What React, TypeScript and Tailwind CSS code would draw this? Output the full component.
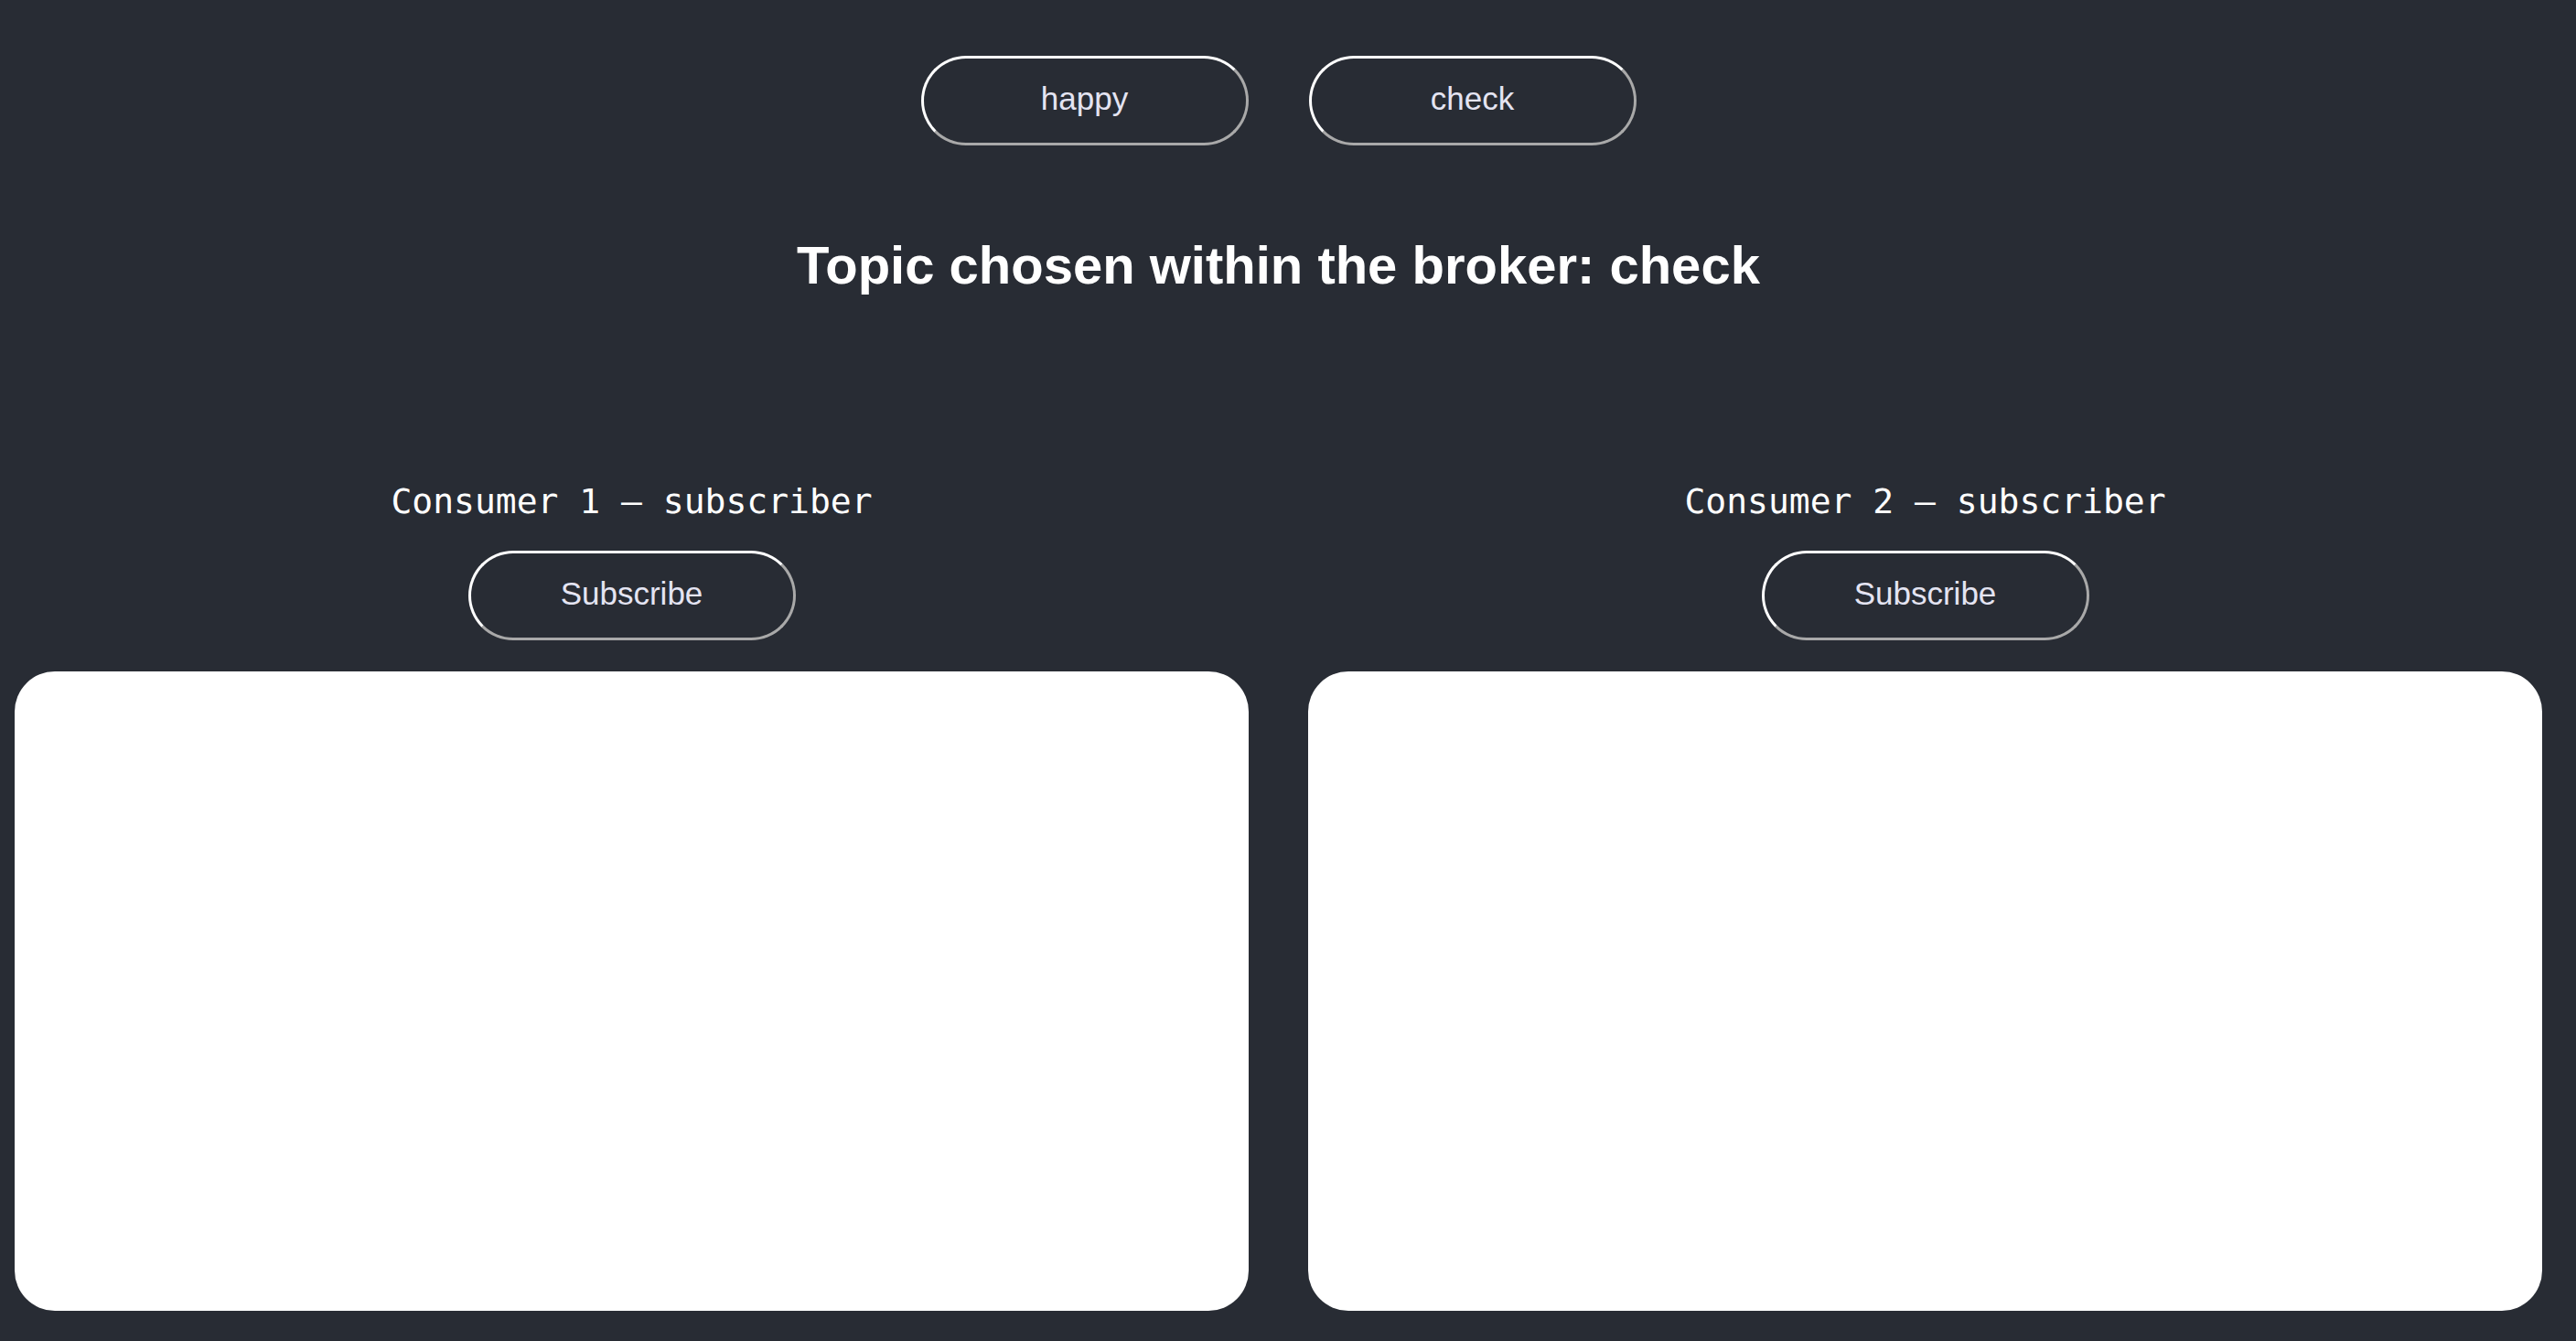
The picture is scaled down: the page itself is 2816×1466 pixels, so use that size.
import React from "react";

function PillButton({ label }: { label: string }) {
  return (
    <button
      type="button"
      className="w-[358px] h-[98px] pb-[6px] rounded-full border-[3px] border-t-white border-l-white border-r-[#a9a9a9] border-b-[#a9a9a9] bg-[#282c34] text-[#e4e4f2] text-[35px] leading-none font-['Liberation_Sans',Arial,sans-serif]"
    >
      {label}
    </button>
  );
}

function Consumer({ n }: { n: number }) {
  return (
    <div className="flex flex-col items-center">
      <div className="h-[38px] leading-[38px] text-[38px] text-white font-['DejaVu_Sans_Mono',monospace] whitespace-pre">
        {`Consumer ${n} — subscriber`}
      </div>
      <div className="mt-[35px]">
        <PillButton label="Subscribe" />
      </div>
      <div className="mt-[34px] w-full h-[699px] bg-white rounded-[44px]" />
    </div>
  );
}

export default function App() {
  return (
    <div className="min-h-screen w-full bg-[#282c34]">
      <div className="w-[2795px] pt-[61px] pb-[33px] flex flex-col items-center">
        <div className="flex justify-center gap-[66px]">
          <PillButton label="happy" />
          <PillButton label="check" />
        </div>
        <h1 className="mt-[102px] h-[58px] leading-[58px] text-[58px] font-bold text-white font-['Liberation_Sans',Arial,sans-serif]">
          Topic chosen within the broker: check
        </h1>
        <div className="mt-[210px] w-full px-4 grid grid-cols-2 gap-[65px]">
          <Consumer n={1} />
          <Consumer n={2} />
        </div>
      </div>
    </div>
  );
}
